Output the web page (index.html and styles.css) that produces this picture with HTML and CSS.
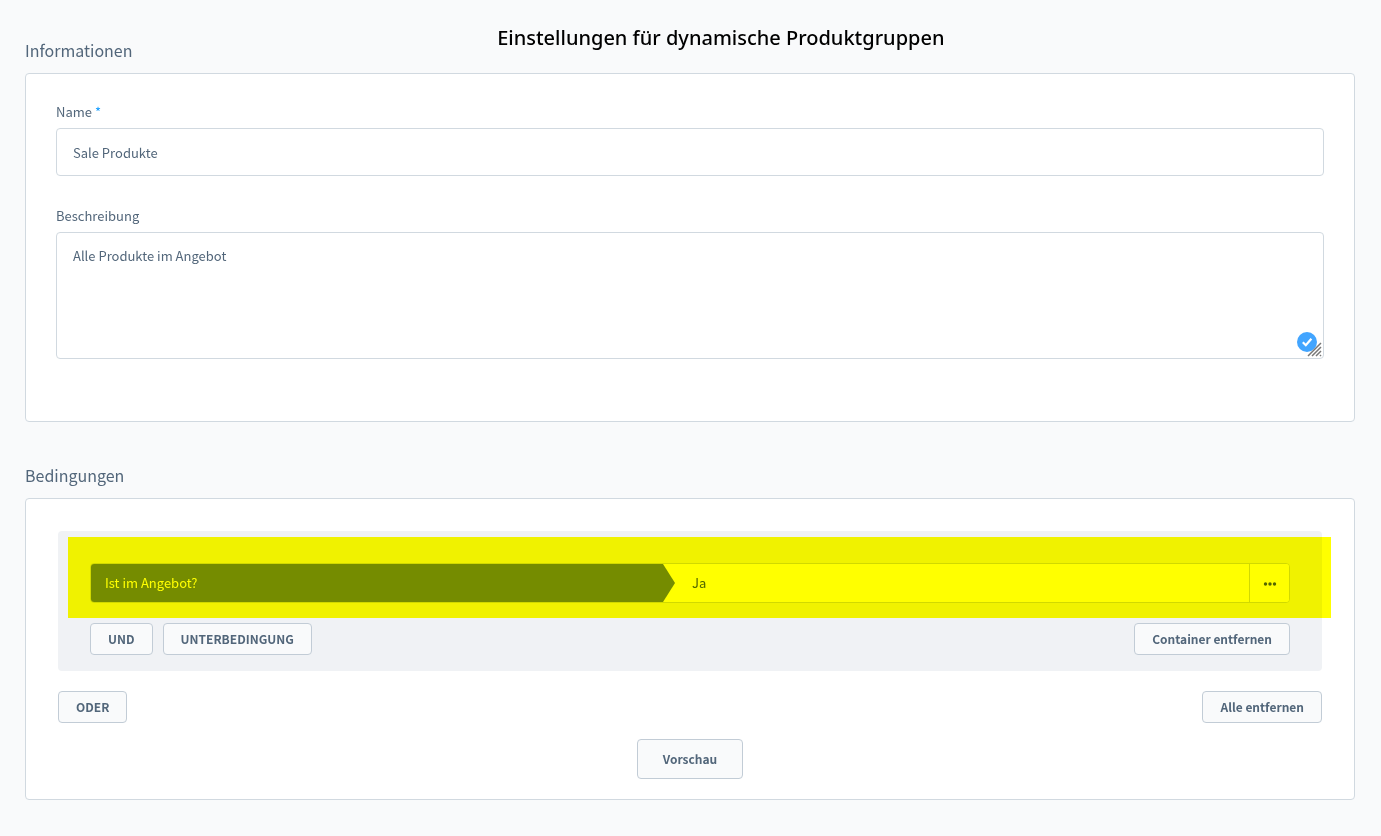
FILE: index.html
```html
<!DOCTYPE html>
<html lang="de">
<head>
<meta charset="utf-8">
<title>Einstellungen für dynamische Produktgruppen</title>
<link rel="stylesheet" href="styles.css">
</head>
<body>
<h1 class="page-title">Einstellungen für dynamische Produktgruppen</h1>
<main class="page">
  <section class="section">
    <h2 class="section-title">Informationen</h2>
    <div class="card card-info">
      <div class="field">
        <label class="label" for="name">Name <span class="required">*</span></label>
        <input class="control" id="name" type="text" value="Sale Produkte">
      </div>
      <div class="field">
        <label class="label" for="description">Beschreibung</label>
        <div class="textarea-wrap">
          <textarea class="control control-area" id="description" spellcheck="false">Alle Produkte im Angebot</textarea>
          <svg class="check" viewBox="0 0 20 20" aria-hidden="true"><circle cx="10" cy="10" r="10" fill="#42a5ff"/><path d="M5.800 10.300l3 2.900L14.400 6.700" fill="none" stroke="#fff" stroke-width="2.200"/></svg>
          <svg class="grip" viewBox="0 0 15 15" aria-hidden="true"><path d="M1 14L14 1M5 14l9-9M9 14l5-5M13 14l1-1" fill="none" stroke="#777" stroke-width="1.500"/></svg>
        </div>
      </div>
    </div>
  </section>
  <section class="section">
    <h2 class="section-title">Bedingungen</h2>
    <div class="card card-rules">
      <div class="container">
        <div class="condition">
          <select class="condition-type" aria-label="Bedingung"><option>Ist im Angebot?</option></select>
          <select class="condition-value" aria-label="Wert"><option>Ja</option></select>
          <button class="condition-menu" type="button" aria-label="Weitere Aktionen"><svg class="dots" viewBox="0 0 14 4"><g fill="#52667a"><circle cx="2.500" cy="2" r="1.700"/><circle cx="7" cy="2" r="1.700"/><circle cx="11.500" cy="2" r="1.700"/></g></svg></button>
        </div>
        <div class="actions">
          <button class="btn" type="button">UND</button>
          <button class="btn" type="button">UNTERBEDINGUNG</button>
          <button class="btn btn-end" type="button">Container entfernen</button>
        </div>
        <div class="highlight"></div>
      </div>
      <div class="actions">
        <button class="btn" type="button">ODER</button>
        <button class="btn btn-end" type="button">Alle entfernen</button>
      </div>
      <button class="btn btn-large" type="button">Vorschau</button>
    </div>
  </section>
</main>
</body>
</html>
```

FILE: styles.css
```css
* { box-sizing: border-box; }
body {
  margin: 0;
  background: #f9fafb;
  color: #52667a;
  font: 13px/20px "Noto Sans CJK SC", "Noto Sans", sans-serif;
}
input, textarea, select, button { font: inherit; color: inherit; margin: 0; }
.page-title {
  position: absolute;
  left: 36%;
  top: 24px;
  margin: 0;
  color: #000;
  font: 500 20px/28px "Noto Sans", sans-serif;
  white-space: nowrap;
}
.page {
  display: flex;
  flex-direction: column;
  gap: 40px;
  padding: 37px 26px 36px 25px;
}
.section-title { margin: 0 0 10px; font-size: 16px; font-weight: 400; line-height: 26px; }
.card { background: #fff; border: 1px solid #d1d9e0; border-radius: 4px; }
.card-info {
  display: flex;
  flex-direction: column;
  gap: 30px;
  padding: 28px 30px 62px;
}
.field { display: flex; flex-direction: column; gap: 6px; }
.required { color: #189eff; }
.control {
  display: block;
  width: 100%;
  height: 48px;
  padding: 0 16px;
  background: #fff;
  border: 1px solid #d1d9e0;
  border-radius: 4px;
  outline: 0;
}
.control-area { height: 127px; padding: 13px 16px; resize: none; }
.textarea-wrap { position: relative; }
.check { position: absolute; right: 7px; bottom: 7px; width: 20px; height: 20px; }
.grip { position: absolute; right: 2px; bottom: 2px; width: 15px; height: 15px; }
.card-rules {
  display: flex;
  flex-direction: column;
  padding: 32px 32px 20px;
}
.container {
  position: relative;
  margin-bottom: 20px;
  padding: 32px 32px 16px;
  background: #f0f2f5;
  border-radius: 4px;
}
.condition {
  display: flex;
  height: 40px;
  margin-bottom: 20px;
  background: #fff;
  border: 1px solid #d1d9e0;
  border-radius: 4px;
  overflow: hidden;
}
.condition-type, .condition-value { appearance: none; border: 0; border-radius: 0; outline: 0; }
.condition-type {
  flex: 0 0 calc(50% - 15px);
  padding: 0 14px;
  background: #758ca3;
  color: #fff;
  clip-path: polygon(0 0, calc(100% - 12px) 0, 100% 50%, calc(100% - 12px) 100%, 0 100%);
}
.condition-value { flex: 1; padding: 0 17px; background: #fff; }
.condition-menu {
  display: flex;
  flex: 0 0 40px;
  align-items: center;
  justify-content: center;
  padding: 2px 0 0;
  background: #fff;
  border: 0;
  border-left: 1px solid #d1d9e0;
}
.dots { width: 14px; height: 4px; }
.actions { display: flex; gap: 10px; }
.btn {
  height: 32px;
  padding: 0 17px;
  background: #f9fafb;
  border: 1px solid #c2ccd6;
  border-radius: 4px;
  font-size: 12px;
  font-weight: 600;
  white-space: nowrap;
}
.btn-end { margin-left: auto; }
.btn-large { align-self: center; height: 40px; margin-top: 16px; padding: 0 25px; }
.highlight {
  position: absolute;
  top: 6px;
  left: 10px;
  right: -9px;
  height: 81px;
  background: #ff0;
  mix-blend-mode: multiply;
  pointer-events: none;
}
```
